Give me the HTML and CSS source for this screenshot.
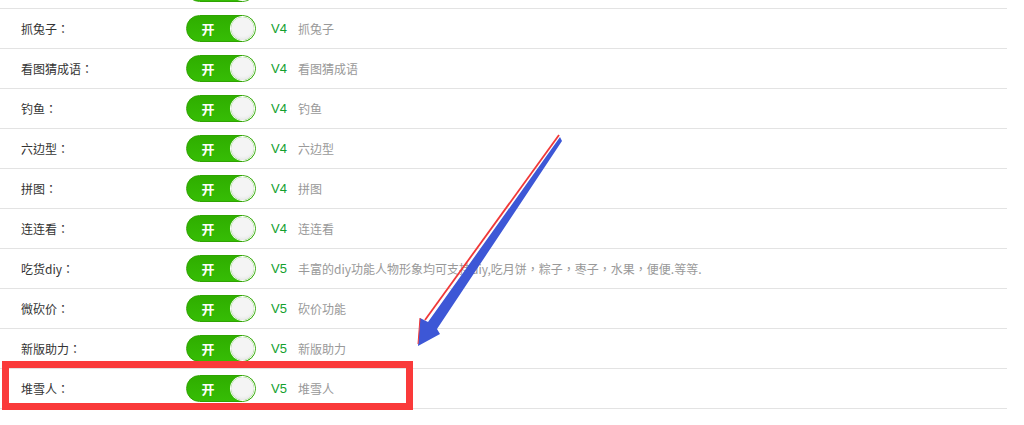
FILE: index.html
```html
<html>
	<head>
		<meta charset="utf-8">
		<link rel="stylesheet" href="styles.css">
	</head>
	<body>
		<div class="plugin-list">
  <div class="row"><span class="label"></span><span class="switch"><b></b><i></i></span></div>
  <div class="row"><span class="label">抓兔子：</span><span class="switch"><b>开</b><i></i></span><span class="ver">V4</span><span class="desc">抓兔子</span></div>
  <div class="row"><span class="label">看图猜成语：</span><span class="switch"><b>开</b><i></i></span><span class="ver">V4</span><span class="desc">看图猜成语</span></div>
  <div class="row"><span class="label">钓鱼：</span><span class="switch"><b>开</b><i></i></span><span class="ver">V4</span><span class="desc">钓鱼</span></div>
  <div class="row"><span class="label">六边型：</span><span class="switch"><b>开</b><i></i></span><span class="ver">V4</span><span class="desc">六边型</span></div>
  <div class="row"><span class="label">拼图：</span><span class="switch"><b>开</b><i></i></span><span class="ver">V4</span><span class="desc">拼图</span></div>
  <div class="row"><span class="label">连连看：</span><span class="switch"><b>开</b><i></i></span><span class="ver">V4</span><span class="desc">连连看</span></div>
  <div class="row"><span class="label">吃货diy：</span><span class="switch"><b>开</b><i></i></span><span class="ver">V5</span><span class="desc">丰富的diy功能人物形象均可支持diy,吃月饼，粽子，枣子，水果，便便.等等.</span></div>
  <div class="row"><span class="label">微砍价：</span><span class="switch"><b>开</b><i></i></span><span class="ver">V5</span><span class="desc">砍价功能</span></div>
  <div class="row"><span class="label">新版助力：</span><span class="switch"><b>开</b><i></i></span><span class="ver">V5</span><span class="desc">新版助力</span></div>
  <div class="row"><span class="label">堆雪人：</span><span class="switch"><b>开</b><i></i></span><span class="ver">V5</span><span class="desc">堆雪人</span></div>
</div>
<div class="mark-box"></div>
<svg class="mark-arrow" width="1024" height="425" viewBox="0 0 1024 425">
  <polygon points="560,137 428,322 420,318 418,346 440,334 437,329 562,141" fill="#3d57d6"/>
  <line x1="559" y1="135" x2="425" y2="320" stroke="#f03838" stroke-width="1.8"/>
  <line x1="420" y1="318" x2="418" y2="344" stroke="#f03838" stroke-width="1"/>
</svg>
	</body>
</html>
```

FILE: styles.css
```css
body {
  margin: 0;
  background: #fff;
  font-family: "Noto Sans CJK TC", "Noto Sans CJK SC", sans-serif;
  font-size: 12px;
  color: #333;
  overflow: hidden;
}

.plugin-list {
  width: 1007px;
  margin-top: -31px;
}

.row {
  display: flex;
  align-items: center;
  height: 39px;
  padding-left: 21px;
  border-bottom: 1px solid #e3e3e3;
}

.label {
  width: 165px;
}

.switch {
  position: relative;
  display: flex;
  align-items: center;
  box-sizing: border-box;
  width: 70px;
  height: 27px;
  border: 1px solid #2ea400;
  border-radius: 14px;
  background: linear-gradient(#2fae00, #36bd05);
}

.switch b {
  width: 42px;
  text-align: center;
  color: #fff;
  font-size: 13px;
  font-weight: bold;
}

.switch i {
  position: absolute;
  right: 1px;
  top: 1px;
  width: 23px;
  height: 23px;
  border-radius: 50%;
  background: radial-gradient(circle at 50% 40%, #f4f4f4 55%, #dcdcdc 100%);
  box-shadow: 0 0 0 1px #fff;
}

.ver {
  margin-left: 15px;
  width: 27px;
  color: #13a02e;
  font-family: "Liberation Sans", sans-serif;
  font-size: 13px;
}

.desc {
  color: #999;
  font-size: 12px;
}

.mark-box {
  position: absolute;
  left: 2px;
  top: 361px;
  width: 397px;
  height: 35px;
  border: 7px solid #fa3a3a;
}

.mark-arrow {
  position: absolute;
  left: 0;
  top: 0;
}
```
